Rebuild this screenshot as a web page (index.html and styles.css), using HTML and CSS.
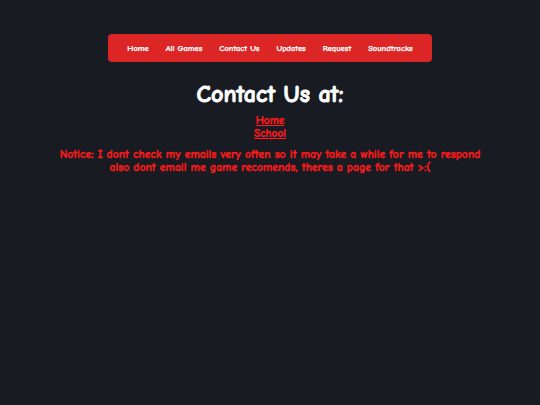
FILE: index.html
```html
<!DOCTYPE html>
<html>
<head>
<meta charset="utf-8">
<link rel="stylesheet" href="styles.css">
</head>
<body>
<nav class="nav">
  <a href="#">Home</a>
  <a href="#">All Games</a>
  <a href="#">Contact Us</a>
  <a href="#">Updates</a>
  <a href="#">Request</a>
  <a href="#">Soundtracks</a>
</nav>
<main class="content">
  <h1 class="title">Contact Us at:</h1>
  <div class="links">
    <a href="#">Home</a>
    <a href="#">School</a>
  </div>
  <p class="notice">Notice: I dont check my emails very often so it may take a while for me to respond<br>also dont email me game recomends, theres a page for that &gt;:(</p>
</main>
</body>
</html>
```
FILE: styles.css
```css
html, body {
  margin: 0;
  padding: 0;
}
body {
  background: #181b22;
  width: 540px;
  height: 405px;
  font-family: "Comic Sans MS", "Comic Neue", "Liberation Sans", sans-serif;
  font-weight: bold;
  padding-top: 34px;
  box-sizing: border-box;
}
.nav {
  width: 324px;
  height: 28px;
  margin: 0 auto;
  background: #dc2626;
  border-radius: 4px;
  display: flex;
  align-items: center;
  justify-content: center;
  gap: 17px;
  box-sizing: border-box;
}
.nav a {
  color: #ffffff;
  text-decoration: none;
  font-size: 8.5px;
  font-weight: 900;
  -webkit-text-stroke: 0.25px #ffffff;
}
.content {
  text-align: center;
}
.title {
  color: #ffffff;
  font-size: 24px;
  font-weight: 900;
  margin: 18px 0 6px;
  line-height: 28px;
  -webkit-text-stroke: 0.9px #ffffff;
}
.links {
  display: flex;
  flex-direction: column;
  align-items: center;
}
.links a {
  color: #ff1a1a;
  font-size: 11.4px;
  font-weight: 900;
  line-height: 13px;
  text-decoration: underline;
  -webkit-text-stroke: 0.35px #ff1a1a;
}
.notice {
  color: #ff1a1a;
  font-size: 11.7px;
  font-weight: 900;
  line-height: 13px;
  margin: 8px 0 0;
  -webkit-text-stroke: 0.35px #ff1a1a;
}
```
